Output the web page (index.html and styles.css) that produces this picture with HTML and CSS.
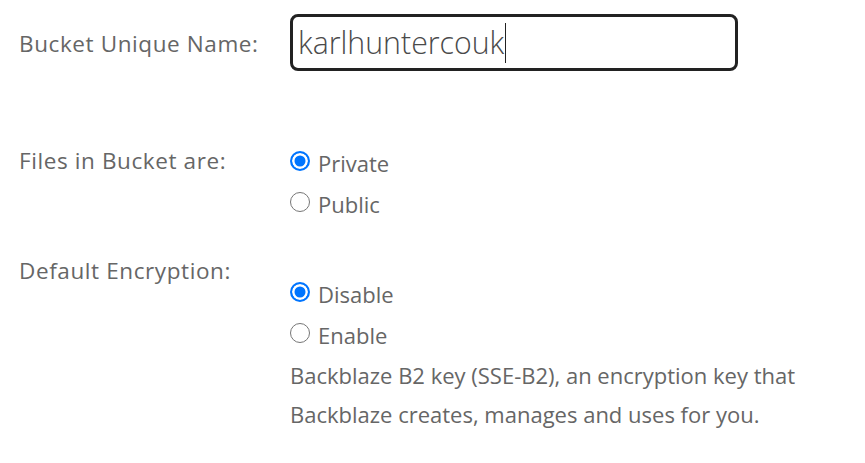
FILE: index.html
```html
<!DOCTYPE html>
<html>
<head>
<meta charset="utf-8">
<link rel="stylesheet" href="styles.css">
</head>
<body>
<div class="form">
  <div class="row row-name">
    <div class="label">Bucket Unique Name:</div>
    <div class="input"><span class="value">karlhuntercouk</span><span class="caret"></span></div>
  </div>
  <div class="row row-files">
    <div class="label">Files in Bucket are:</div>
    <div class="options opts-files">
      <div class="option"><span class="radio checked"></span><span>Private</span></div>
      <div class="option"><span class="radio"></span><span>Public</span></div>
    </div>
  </div>
  <div class="row row-enc">
    <div class="label">Default Encryption:</div>
    <div class="options opts-enc">
      <div class="option"><span class="radio checked"></span><span>Disable</span></div>
      <div class="option"><span class="radio"></span><span>Enable</span></div>
      <p class="desc">Backblaze B2 key (SSE-B2), an encryption key that Backblaze creates, manages and uses for you.</p>
    </div>
  </div>
</div>
</body>
</html>
```
FILE: styles.css
```css
html, body {
  margin: 0;
  padding: 0;
  background: #fff;
}
body {
  font-family: "Open Sans", sans-serif;
  font-size: 22px;
  color: #666;
  line-height: 41px;
}
.form {
  padding: 14px 0 0 19px;
}
.row {
  display: grid;
  grid-template-columns: 271px 448px;
}
.label {
  font-size: 22.5px;
  letter-spacing: 0.6px;
}
.row-name {
  align-items: center;
}
.row-name .label {
  margin-top: 2px;
}
.input {
  box-sizing: border-box;
  height: 57px;
  border: 3px solid #222;
  border-radius: 8px;
  padding-left: 5px;
  display: flex;
  align-items: center;
  font-weight: 300;
  font-size: 30.3px;
  color: #4a4a4a;
}
.caret {
  display: inline-block;
  width: 1px;
  height: 40px;
  background: #222;
  margin-left: 1px;
}
.row-files {
  margin-top: 68px;
}
.row-files .label {
  margin-top: 1px;
}
.opts-files {
  padding-top: 4px;
}
.row-enc {
  margin-top: 24px;
}
.row-enc .label {
  margin-top: 1px;
}
.opts-enc {
  padding-top: 25px;
}
.option {
  display: flex;
  align-items: center;
  gap: 8px;
}
.radio {
  box-sizing: border-box;
  width: 20px;
  height: 20px;
  border-radius: 50%;
  border: 1.5px solid #767676;
  background: #fff;
  margin-top: -5px;
  flex: none;
}
.radio.checked {
  border: 2px solid #0075ff;
  box-shadow: inset 0 0 0 2.5px #fff;
  background: #0075ff;
}
.desc {
  margin: 0;
  line-height: 39px;
  width: 540px;
}
```
